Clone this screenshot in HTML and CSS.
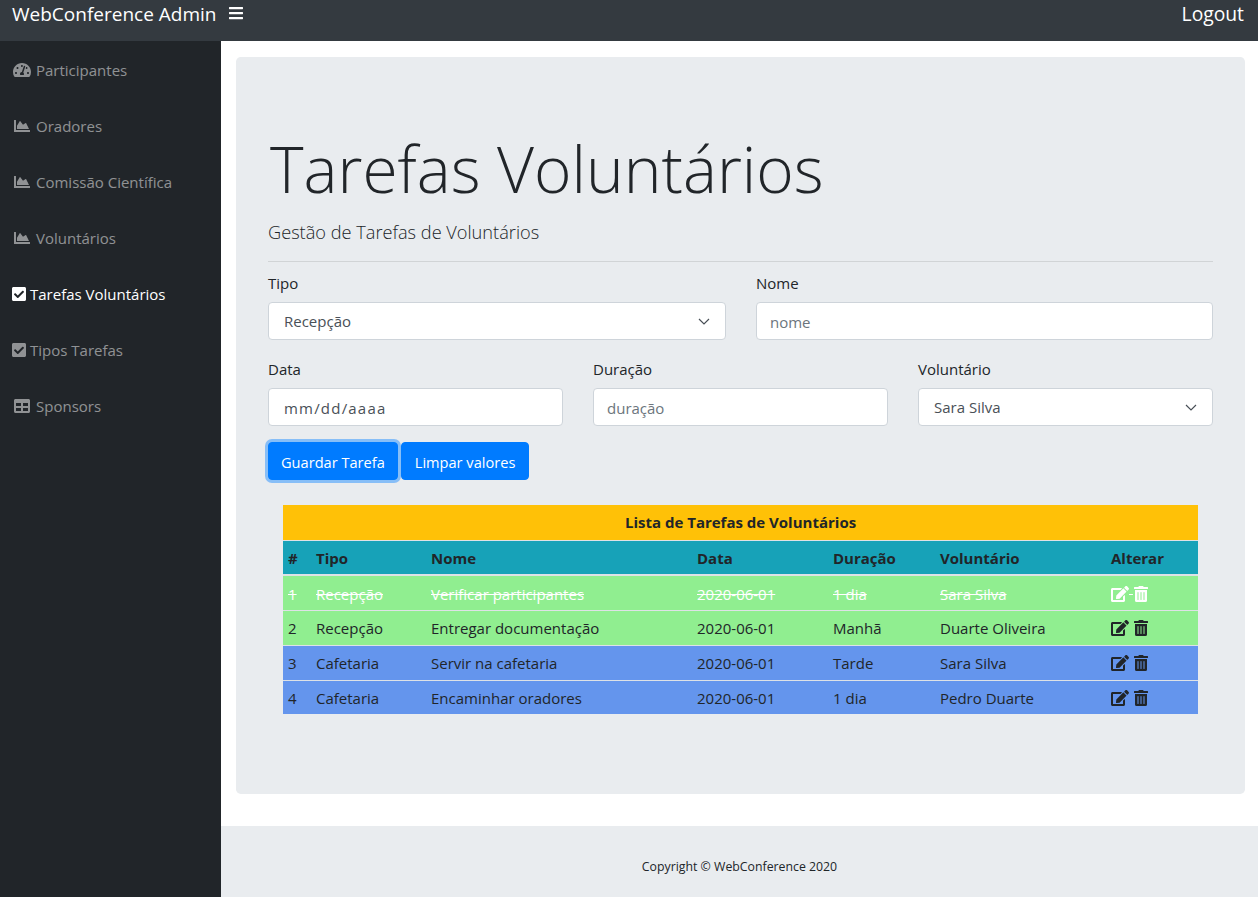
FILE: index.html
```html
<!DOCTYPE html>
<html lang="pt">
<head>
    <meta charset="UTF-8">
    <title>WebConference Admin</title>
    <link rel="stylesheet" href="styles.css">
</head>
<body>
    <svg class="icon-defs" aria-hidden="true">
        <symbol id="i-bars" viewBox="0 0 448 512"><path d="M16 132h416c8.837 0 16-7.163 16-16V76c0-8.837-7.163-16-16-16H16C7.163 60 0 67.163 0 76v40c0 8.837 7.163 16 16 16zm0 160h416c8.837 0 16-7.163 16-16v-40c0-8.837-7.163-16-16-16H16c-8.837 0-16 7.163-16 16v40c0 8.837 7.163 16 16 16zm0 160h416c8.837 0 16-7.163 16-16v-40c0-8.837-7.163-16-16-16H16c-8.837 0-16 7.163-16 16v40c0 8.837 7.163 16 16 16z"/></symbol>
        <symbol id="i-gauge" viewBox="0 0 576 512"><path d="M288 32C128.94 32 0 160.94 0 320c0 52.8 14.25 102.26 39.06 144.8 5.61 9.62 16.3 15.2 27.44 15.2h443c11.14 0 21.83-5.58 27.44-15.2C561.75 422.26 576 372.8 576 320c0-159.06-128.94-288-288-288zm0 64c14.71 0 26.58 10.13 30.32 23.65-1.11 2.26-2.64 4.23-3.45 6.67l-9.22 27.67c-5.13 3.49-10.97 6.01-17.64 6.01-17.67 0-32-14.33-32-32S270.33 96 288 96zM96 384c-17.67 0-32-14.33-32-32s14.33-32 32-32 32 14.33 32 32-14.33 32-32 32zm48-160c-17.67 0-32-14.33-32-32s14.33-32 32-32 32 14.33 32 32-14.33 32-32 32zm246.77-72.41l-61.33 184C343.13 347.33 352 364.54 352 384c0 11.72-3.38 22.55-8.88 32H232.88c-5.5-9.45-8.88-20.28-8.88-32 0-33.94 26.5-61.43 59.9-63.59l61.34-184.01c4.17-12.56 17.73-19.45 30.36-15.17 12.57 4.19 19.35 17.79 15.17 30.36zm14.66 57.2l15.52-46.55c3.47-1.29 7.13-2.23 11.05-2.23 17.67 0 32 14.33 32 32s-14.33 32-32 32c-11.38-.01-20.89-6.28-26.57-15.22zM480 384c-17.67 0-32-14.33-32-32s14.33-32 32-32 32 14.33 32 32-14.33 32-32 32z"/></symbol>
        <symbol id="i-chart" viewBox="0 0 512 512"><path d="M500 384c6.6 0 12 5.4 12 12v40c0 6.6-5.4 12-12 12H12c-6.6 0-12-5.4-12-12V76c0-6.6 5.4-12 12-12h40c6.6 0 12 5.4 12 12v308h436zM372.7 159.5L288 216l-85.3-113.7c-5.1-6.8-15.5-6.3-19.9 1L96 248v104h384l-89.9-187.8c-3.2-6.5-11.4-8.7-17.4-4.7z"/></symbol>
        <symbol id="i-check" viewBox="0 0 448 512"><path d="M400 480H48c-26.51 0-48-21.49-48-48V80c0-26.51 21.49-48 48-48h352c26.51 0 48 21.49 48 48v352c0 26.51-21.49 48-48 48zm-204.686-98.059l184-184c6.248-6.248 6.248-16.379 0-22.627l-22.627-22.627c-6.248-6.248-16.379-6.249-22.628 0L184 302.745l-70.059-70.059c-6.248-6.248-16.379-6.248-22.628 0l-22.627 22.627c-6.248 6.248-6.248 16.379 0 22.627l104 104c6.249 6.25 16.379 6.25 22.628.001z"/></symbol>
        <symbol id="i-table" viewBox="0 0 512 512"><path d="M464 32H48C21.49 32 0 53.49 0 80v352c0 26.51 21.49 48 48 48h416c26.51 0 48-21.49 48-48V80c0-26.51-21.49-48-48-48zM224 416H64v-96h160v96zm0-160H64v-96h160v96zm224 160H288v-96h160v96zm0-160H288v-96h160v96z"/></symbol>
        <symbol id="i-edit" viewBox="0 0 576 512"><path d="M402.6 83.2l90.2 90.2c3.8 3.8 3.8 10 0 13.8L274.4 405.6l-92.8 10.3c-12.4 1.4-22.9-9.1-21.5-21.5l10.3-92.8L388.8 83.2c3.8-3.8 10-3.8 13.8 0zm162-22.9l-48.8-48.8c-15.2-15.2-39.9-15.2-55.2 0l-35.4 35.4c-3.8 3.8-3.8 10 0 13.8l90.2 90.2c3.8 3.8 10 3.8 13.8 0l35.4-35.4c15.2-15.3 15.2-40 0-55.2zM384 346.2V448H64V128h229.8c3.2 0 6.2-1.3 8.5-3.5l40-40c7.6-7.6 2.2-20.5-8.5-20.5H48C21.5 64 0 85.5 0 112v352c0 26.5 21.5 48 48 48h352c26.5 0 48-21.5 48-48V306.2c0-10.7-12.9-16-20.5-8.5l-40 40c-2.2 2.3-3.5 5.3-3.5 8.5z"/></symbol>
        <symbol id="i-trash" viewBox="0 0 448 512"><path d="M32 464a48 48 0 0 0 48 48h288a48 48 0 0 0 48-48V128H32zm272-256a16 16 0 0 1 32 0v224a16 16 0 0 1-32 0zm-96 0a16 16 0 0 1 32 0v224a16 16 0 0 1-32 0zm-96 0a16 16 0 0 1 32 0v224a16 16 0 0 1-32 0zM432 32H312l-9.4-18.7A24 24 0 0 0 281.1 0H166.8a23.72 23.72 0 0 0-21.4 13.3L136 32H16A16 16 0 0 0 0 48v32a16 16 0 0 0 16 16h416a16 16 0 0 0 16-16V48a16 16 0 0 0-16-16z"/></symbol>
    </svg>

    <header class="topbar">
        <a class="brand" href="#">WebConference Admin</a>
        <svg class="icon toggle"><use href="#i-bars"/></svg>
        <a class="logout" href="#">Logout</a>
    </header>

    <div class="wrapper">
        <nav class="sidebar">
            <a class="nav-link" href="#"><svg class="icon icon-fw"><use href="#i-gauge"/></svg>Participantes</a>
            <a class="nav-link" href="#"><svg class="icon icon-fw"><use href="#i-chart"/></svg>Oradores</a>
            <a class="nav-link" href="#"><svg class="icon icon-fw"><use href="#i-chart"/></svg>Comissão Científica</a>
            <a class="nav-link" href="#"><svg class="icon icon-fw"><use href="#i-chart"/></svg>Voluntários</a>
            <a class="nav-link active" href="#"><svg class="icon icon-sq"><use href="#i-check"/></svg>Tarefas Voluntários</a>
            <a class="nav-link" href="#"><svg class="icon icon-sq"><use href="#i-check"/></svg>Tipos Tarefas</a>
            <a class="nav-link" href="#"><svg class="icon icon-fw"><use href="#i-table"/></svg>Sponsors</a>
        </nav>

        <div class="content">
            <main class="jumbotron">
                <h1>Tarefas Voluntários</h1>
                <p class="lead">Gestão de Tarefas de Voluntários</p>
                <hr>

                <form>
                    <div class="form-row cols-2">
                        <div class="form-group">
                            <label for="tipo">Tipo</label>
                            <select id="tipo" class="form-control">
                                <option>Recepção</option>
                                <option>Cafetaria</option>
                            </select>
                        </div>
                        <div class="form-group">
                            <label for="nome">Nome</label>
                            <input id="nome" class="form-control" type="text" placeholder="nome">
                        </div>
                    </div>
                    <div class="form-row cols-3">
                        <div class="form-group">
                            <label for="data">Data</label>
                            <input id="data" class="form-control date-field" type="text" value="mm/dd/aaaa">
                        </div>
                        <div class="form-group">
                            <label for="duracao">Duração</label>
                            <input id="duracao" class="form-control" type="text" placeholder="duração">
                        </div>
                        <div class="form-group">
                            <label for="voluntario">Voluntário</label>
                            <select id="voluntario" class="form-control">
                                <option>Sara Silva</option>
                                <option>Duarte Oliveira</option>
                                <option>Pedro Duarte</option>
                            </select>
                        </div>
                    </div>
                    <div class="actions">
                        <button type="button" class="btn btn-focus">Guardar Tarefa</button>
                        <button type="button" class="btn">Limpar valores</button>
                    </div>
                </form>

                <table class="tasks">
                    <colgroup>
                        <col class="c-num"><col class="c-tipo"><col class="c-nome"><col class="c-data"><col class="c-dur"><col class="c-vol"><col class="c-alt">
                    </colgroup>
                    <thead>
                        <tr class="row-title"><th colspan="7">Lista de Tarefas de Voluntários</th></tr>
                        <tr class="row-head">
                            <th>#</th><th>Tipo</th><th>Nome</th><th>Data</th><th>Duração</th><th>Voluntário</th><th>Alterar</th>
                        </tr>
                    </thead>
                    <tbody>
                        <tr class="row-green row-done">
                            <td>1</td><td>Recepção</td><td>Verificar participantes</td><td>2020-06-01</td><td>1 dia</td><td>Sara Silva</td>
                            <td class="tools"><svg class="icon t-edit"><use href="#i-edit"/></svg> <svg class="icon t-trash"><use href="#i-trash"/></svg></td>
                        </tr>
                        <tr class="row-green">
                            <td>2</td><td>Recepção</td><td>Entregar documentação</td><td>2020-06-01</td><td>Manhã</td><td>Duarte Oliveira</td>
                            <td class="tools"><svg class="icon t-edit"><use href="#i-edit"/></svg> <svg class="icon t-trash"><use href="#i-trash"/></svg></td>
                        </tr>
                        <tr class="row-blue">
                            <td>3</td><td>Cafetaria</td><td>Servir na cafetaria</td><td>2020-06-01</td><td>Tarde</td><td>Sara Silva</td>
                            <td class="tools"><svg class="icon t-edit"><use href="#i-edit"/></svg> <svg class="icon t-trash"><use href="#i-trash"/></svg></td>
                        </tr>
                        <tr class="row-blue row-last">
                            <td>4</td><td>Cafetaria</td><td>Encaminhar oradores</td><td>2020-06-01</td><td>1 dia</td><td>Pedro Duarte</td>
                            <td class="tools"><svg class="icon t-edit"><use href="#i-edit"/></svg> <svg class="icon t-trash"><use href="#i-trash"/></svg></td>
                        </tr>
                    </tbody>
                </table>
            </main>

            <footer class="footer">Copyright © WebConference 2020</footer>
        </div>
    </div>
</body>
</html>
```

FILE: styles.css
```css
* {
    box-sizing: border-box;
}

body {
    margin: 0;
    height: 897px;
    overflow: hidden;
    font-family: "Open Sans", "Noto Sans", sans-serif;
    font-size: 15px;
    line-height: 24px;
    color: #212529;
    background-color: #fff;
    display: flex;
    flex-direction: column;
}

a {
    text-decoration: none;
}

.icon-defs {
    display: none;
}

.icon {
    width: 16px;
    height: 16px;
    fill: currentColor;
    vertical-align: -2px;
}

/* top bar */
.topbar {
    height: 41px;
    flex: none;
    display: flex;
    align-items: flex-start;
    background-color: #343a40;
    padding: 0 14px 0 12px;
}

.brand,
.logout {
    color: #fff;
    font-size: 19px;
    line-height: 28px;
}

.logout {
    margin-left: auto;
    font-size: 19.3px;
}

.toggle {
    width: 14px;
    height: 16px;
    margin: 5px 0 0 13px;
    color: #fff;
}

/* side menu */
.wrapper {
    flex: 1;
    display: flex;
    min-height: 0;
}

.sidebar {
    width: 221px;
    flex: none;
    padding-top: 1px;
    background-color: #212529;
}

.nav-link {
    display: block;
    padding: 16px 12px;
    color: rgba(255, 255, 255, 0.5);
}

.nav-link.active {
    color: #fff;
}

.icon-fw {
    width: 20px;
    margin-right: 4px;
}

.icon-sq {
    width: 14px;
    margin-right: 4px;
}

/* main area */
.content {
    flex: 1;
    display: flex;
    flex-direction: column;
    padding-top: 16px;
}

.jumbotron {
    height: 737px;
    flex: none;
    margin: 0 13px 32px 15px;
    padding: 69px 32px 0;
    background-color: #e9ecef;
    border-radius: 4.8px;
}

h1 {
    margin: 0 0 5px 2px;
    font-size: 64px;
    font-weight: 300;
    line-height: 86px;
}

.lead {
    margin: 0;
    font-size: 18.2px;
    font-weight: 300;
    line-height: 30px;
}

hr {
    margin: 14px 0 9px;
    border: 0;
    border-top: 1px solid rgba(0, 0, 0, 0.1);
}

.form-row {
    display: grid;
    gap: 30px;
}

.cols-2 {
    grid-template-columns: 458px 457px;
}

.cols-3 {
    grid-template-columns: repeat(3, 295px);
}

.form-group {
    margin-bottom: 17px;
}

.cols-3 .form-group {
    margin-bottom: 16px;
}

label {
    display: block;
    margin-bottom: 7px;
}

.form-control {
    display: block;
    width: 100%;
    height: 38px;
    padding: 8px 13px 6px;
    font: inherit;
    color: #495057;
    background-color: #fff;
    border: 1px solid #ced4da;
    border-radius: 4px;
}

.form-control::placeholder {
    color: #6c757d;
}

.date-field {
    padding-left: 15px;
    letter-spacing: 1.2px;
}

select.form-control {
    padding: 6px 15px;
    appearance: none;
    background-image: url("data:image/svg+xml,%3Csvg xmlns='http://www.w3.org/2000/svg' width='12' height='7'%3E%3Cpath d='M1 1l5 5 5-5' fill='none' stroke='%23495057' stroke-width='1.2'/%3E%3C/svg%3E");
    background-repeat: no-repeat;
    background-position: right 15px center;
}

.actions {
    display: flex;
    gap: 3px;
}

.btn {
    height: 38px;
    padding: 2px 13px 0;
    font: inherit;
    font-size: 14.6px;
    color: #fff;
    background-color: #007bff;
    border: 1px solid #007bff;
    border-radius: 4px;
}

.btn-focus {
    padding: 2px 12px 0;
    box-shadow: 0 0 0 3px rgba(38, 143, 255, 0.5);
}

/* task table */
.tasks {
    width: 915px;
    margin: 25px 0 0 15px;
    border-collapse: collapse;
    table-layout: fixed;
}

.c-num { width: 28px; }
.c-tipo { width: 115px; }
.c-nome { width: 266px; }
.c-data { width: 136px; }
.c-dur { width: 107px; }
.c-vol { width: 171px; }
.c-alt { width: 92px; }

.tasks th,
.tasks td {
    padding: 5px;
    text-align: left;
    border-top: 1px solid #dee2e6;
}

.tasks .row-title th {
    text-align: center;
    background-color: #ffc107;
    padding-top: 5px;
    padding-bottom: 6px;
    border-top: 0;
}

.tasks .row-head th {
    background-color: #17a2b8;
    padding-bottom: 4px;
    border-bottom: 2px solid #dee2e6;
}

.row-green {
    background-color: #90ee90;
}

.row-blue {
    background-color: #6495ed;
}

.row-done {
    color: #fff;
    text-decoration: line-through;
}

.tasks .row-done td {
    padding-top: 6px;
    padding-bottom: 4px;
}

.tasks .row-last td {
    padding-bottom: 4px;
}

.tools {
    white-space: nowrap;
}

.t-edit {
    width: 18px;
}

.t-trash {
    width: 14px;
    margin-left: 1px;
}

/* footer */
.footer {
    flex: 1;
    padding-top: 29px;
    text-align: center;
    font-size: 12.3px;
    background-color: #e9ecef;
}
```
